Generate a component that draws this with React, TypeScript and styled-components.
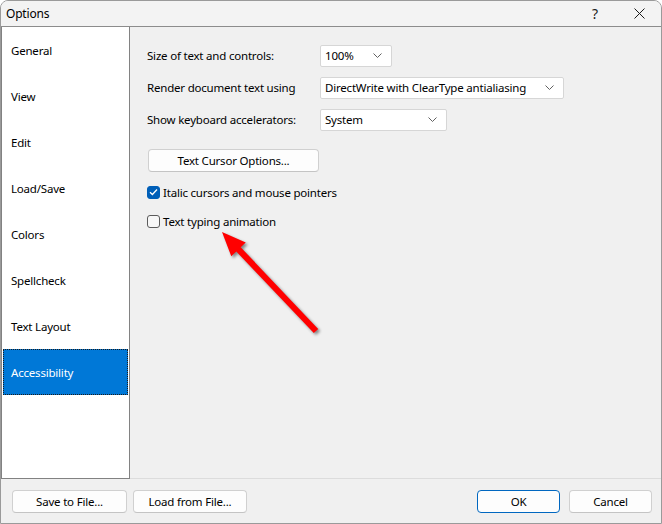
import React from 'react';
import styled, { createGlobalStyle } from 'styled-components';

const GlobalStyle = createGlobalStyle`
  html, body {
    margin: 0;
    padding: 0;
    background: #ffffff;
  }
  * {
    box-sizing: border-box;
  }
`;

const Window = styled.div`
  position: relative;
  width: 662px;
  height: 524px;
  display: flex;
  flex-direction: column;
  background: #f0f0f0;
  border: 1px solid #9a9a9a;
  border-radius: 8px 8px 0 0;
  overflow: hidden;
  font-family: 'Noto Sans', 'Open Sans', sans-serif;
  font-size: 11.5px;
  letter-spacing: -0.2px;
  color: #000;
`;

const TitleBar = styled.div`
  height: 26px;
  flex: none;
  display: flex;
  align-items: center;
  padding-left: 5px;
  background: #f3f3f3;
  border-bottom: 1px solid #8c8c8c;
`;

const Title = styled.div`
  flex: 1;
  font-size: 12px;
`;

const TitleButton = styled.div`
  width: 44px;
  height: 25px;
  display: flex;
  align-items: center;
  justify-content: center;
  font-size: 14px;
  color: #1a1a1a;
`;

const Main = styled.div`
  flex: 1;
  display: flex;
  border-bottom: 1px solid #dcdcdc;
`;

const Sidebar = styled.div`
  width: 129px;
  margin-bottom: -1px;
  padding: 0 1px;
  background: #ffffff;
  border: 1px solid #828282;
  border-top: none;
  display: flex;
  flex-direction: column;
`;

const NavItem = styled.div<{ $active?: boolean }>`
  height: 46px;
  flex: none;
  display: flex;
  align-items: center;
  padding: 1px 0 0 7px;
  background: ${p => (p.$active ? '#0078d7' : 'transparent')};
  color: ${p => (p.$active ? '#ffffff' : '#000000')};
  border: 1px dotted ${p => (p.$active ? '#1b1b1b' : 'transparent')};
`;

const Content = styled.div`
  flex: 1;
  padding: 17px 0 0 17px;
  display: flex;
  flex-direction: column;
`;

const Row = styled.div`
  display: flex;
  align-items: center;
  height: 22px;
  margin-bottom: 10px;
  padding-top: 1px;
`;

const Label = styled.div`
  width: 173px;
  flex: none;
`;

const Select = styled.div<{ $width: number }>`
  width: ${p => p.$width}px;
  height: 22px;
  display: flex;
  align-items: center;
  justify-content: space-between;
  padding: 0 9px 0 4px;
  background: #ffffff;
  border: 1px solid #d6d6d6;
  border-radius: 2px;
`;

const PushButton = styled.div<{ $width: number; $default?: boolean }>`
  width: ${p => p.$width}px;
  height: 23px;
  flex: none;
  display: flex;
  align-items: center;
  justify-content: center;
  background: #fdfdfd;
  border: 1px solid ${p => (p.$default ? '#0067c0' : '#d0d0d0')};
  border-bottom-color: ${p => (p.$default ? '#0067c0' : '#c4c4c4')};
  border-radius: 4px;
`;

const CursorButtonWrap = styled.div`
  margin: 9px 0 0 1px;
`;

const CheckRow = styled.label`
  display: flex;
  align-items: center;
  gap: 3px;
  height: 16px;
  margin-top: 12px;
  & + & {
    margin-top: 13px;
  }
`;

const Box = styled.span<{ $checked?: boolean }>`
  width: 13px;
  height: 13px;
  flex: none;
  display: flex;
  align-items: center;
  justify-content: center;
  border-radius: 3px;
  background: ${p => (p.$checked ? '#005fb8' : '#f7f7f7')};
  border: 1px solid ${p => (p.$checked ? '#005fb8' : '#5b5b5b')};
`;

const Footer = styled.div`
  height: 44px;
  flex: none;
  display: flex;
  align-items: center;
  padding: 1px 9px 0 11px;
  gap: 6px;
`;

const Spacer = styled.div`
  flex: 1;
`;

const FooterRight = styled.div`
  display: flex;
  gap: 9px;
`;

const Annotation = styled.svg`
  position: absolute;
  left: 200px;
  top: 220px;
  overflow: visible;
  filter: drop-shadow(2px 2px 1.5px rgba(0, 0, 0, 0.45));
`;

const Chevron = () => (
  <svg width="9" height="5" viewBox="0 0 9 5">
    <path d="M0.5 0.5 L4.5 4.5 L8.5 0.5" fill="none" stroke="#606060" strokeWidth="1" />
  </svg>
);

const nav = ['General', 'View', 'Edit', 'Load/Save', 'Colors', 'Spellcheck', 'Text Layout', 'Accessibility'];

export default function App() {
  return (
    <>
      <GlobalStyle />
      <Window>
        <TitleBar>
          <Title>Options</Title>
          <TitleButton>?</TitleButton>
          <TitleButton>
            <svg width="11" height="11" viewBox="0 0 11 11">
              <path d="M0.5 0.5 L10.5 10.5 M10.5 0.5 L0.5 10.5" stroke="#1a1a1a" strokeWidth="1" />
            </svg>
          </TitleButton>
        </TitleBar>
        <Main>
          <Sidebar>
            {nav.map(n => (
              <NavItem key={n} $active={n === 'Accessibility'}>
                {n}
              </NavItem>
            ))}
          </Sidebar>
          <Content>
            <Row>
              <Label>Size of text and controls:</Label>
              <Select $width={72}>
                100%
                <Chevron />
              </Select>
            </Row>
            <Row>
              <Label>Render document text using</Label>
              <Select $width={244}>
                DirectWrite with ClearType antialiasing
                <Chevron />
              </Select>
            </Row>
            <Row>
              <Label>Show keyboard accelerators:</Label>
              <Select $width={127}>
                System
                <Chevron />
              </Select>
            </Row>
            <CursorButtonWrap>
              <PushButton $width={171}>Text Cursor Options...</PushButton>
            </CursorButtonWrap>
            <CheckRow>
              <Box $checked>
                <svg width="9" height="8" viewBox="0 0 9 8">
                  <path d="M1 4.2 L3.4 6.5 L8 1.5" fill="none" stroke="#ffffff" strokeWidth="1.3" />
                </svg>
              </Box>
              Italic cursors and mouse pointers
            </CheckRow>
            <CheckRow>
              <Box />
              Text typing animation
            </CheckRow>
          </Content>
        </Main>
        <Footer>
          <PushButton $width={115}>Save to File...</PushButton>
          <PushButton $width={114}>Load from File...</PushButton>
          <Spacer />
          <FooterRight>
            <PushButton $width={83} $default>
              OK
            </PushButton>
            <PushButton $width={83}>Cancel</PushButton>
          </FooterRight>
        </Footer>
        <Annotation width="120" height="115" viewBox="0 0 120 115">
          <polygon
            points="21,11 44.75,21.5 39.7,26.3 117.2,107.9 112.8,112.1 35.3,30.5 30.25,35.3"
            fill="#ff0000"
          />
        </Annotation>
      </Window>
    </>
  );
}
